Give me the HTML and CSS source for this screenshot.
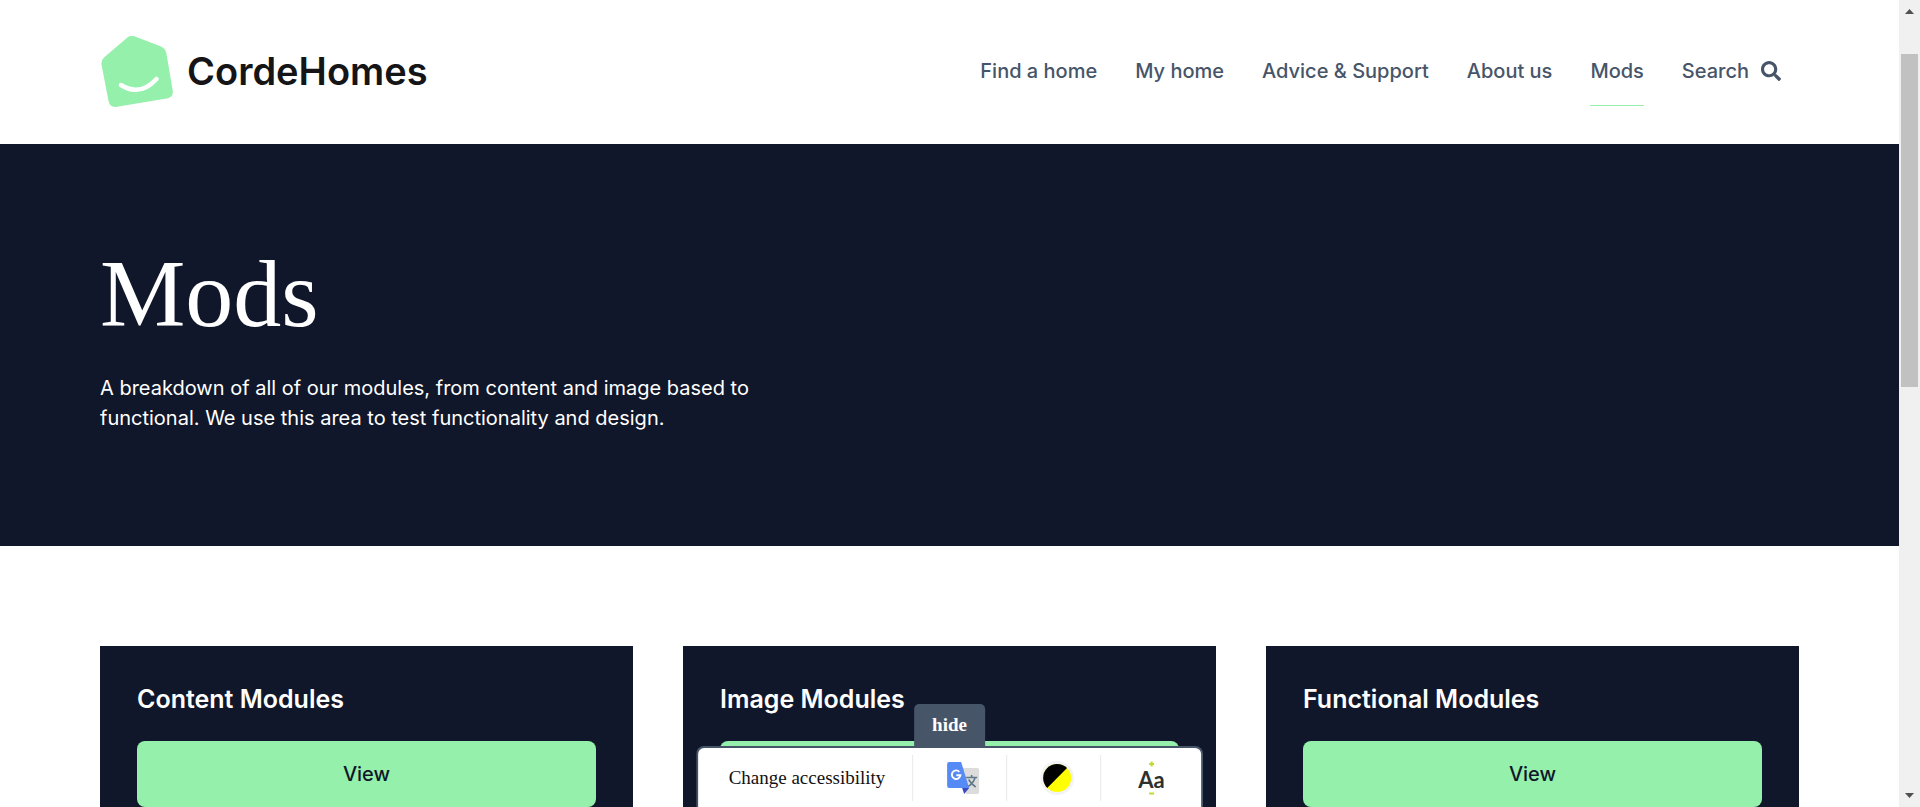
FILE: index.html
```html
<!DOCTYPE html>
<html lang="en">
<head>
<meta charset="utf-8">
<title>Mods | CordeHomes</title>
<link rel="stylesheet" href="styles.css">
</head>
<body>
<div class="viewport">
  <header class="header">
    <a class="logo" href="#">
      <svg class="logo-mark" viewBox="0 0 72 72" aria-hidden="true">
        <path d="M27 1Q30-1.200 34 .6L60 10.500Q64.500 12.500 65.300 17L71.800 55Q72.300 60.500 67 62.200L16 70.800Q9 72 7.500 65L.5 28.500Q0 24.500 3 21.500Z" fill="#94f0ab"/>
        <path d="M20 49Q39 61 55.500 43" fill="none" stroke="#fff" stroke-width="4.500" stroke-linecap="round"/>
      </svg>
      <span class="logo-text">CordeHomes</span>
    </a>
    <nav class="nav">
      <a href="#">Find a home</a>
      <a href="#">My home</a>
      <a href="#">Advice &amp; Support</a>
      <a href="#">About us</a>
      <a href="#" class="current">Mods</a>
      <a href="#" class="search">Search
        <svg viewBox="0 0 512 512" width="20" height="20" fill="currentColor" aria-hidden="true"><path d="M505 442.700L405.300 343c-4.500-4.500-10.600-7-17-7H372c27.600-35.300 44-79.700 44-128C416 93.100 322.900 0 208 0S0 93.100 0 208s93.100 208 208 208c48.300 0 92.700-16.400 128-44v16.300c0 6.400 2.500 12.500 7 17l99.700 99.700c9.400 9.400 24.600 9.400 33.900 0l28.300-28.300c9.400-9.400 9.400-24.600.1-34zM208 336c-70.700 0-128-57.200-128-128 0-70.700 57.200-128 128-128 70.700 0 128 57.200 128 128 0 70.700-57.200 128-128 128z"/></svg>
      </a>
    </nav>
  </header>
  <main>
    <section class="hero">
      <h1>Mods</h1>
      <p>A breakdown of all of our modules, from content and image based to functional. We use this area to test functionality and design.</p>
    </section>
    <section class="cards">
      <article class="card"><h2>Content Modules</h2><a class="button" href="#">View</a></article>
      <article class="card"><h2>Image Modules</h2><a class="button" href="#">View</a></article>
      <article class="card"><h2>Functional Modules</h2><a class="button" href="#">View</a></article>
    </section>
  </main>
  <div class="access">
    <button class="hide" type="button">hide</button>
    <div class="access-bar">
      <span class="access-label">Change accessibility</span>
      <button class="tool" type="button" aria-label="Translate">
        <svg width="34" height="34" viewBox="0 0 34 34">
          <path d="M13 7H31Q33 7 33 9V31Q33 33 31 33H20Z" fill="#dcdcdc"/>
          <path d="M20 16.500H31M25.500 14V16.500M29 16.500Q27 23 21 26M22.500 18.500Q25 23 29.500 26" fill="none" stroke="#607988" stroke-width="1.600"/>
          <path d="M16 27H23L18 33Z" fill="#3a49c0"/>
          <path d="M3 1H15L23 27H3Q1 27 1 25V3Q1 1 3 1Z" fill="#568af5"/>
          <path d="M13.200 10.800A4.300 4.300 0 1 0 14.300 14.200H10.200" fill="none" stroke="#fff" stroke-width="1.900"/>
        </svg>
      </button>
      <button class="tool" type="button" aria-label="Contrast">
        <svg width="34" height="34" viewBox="0 0 34 34">
          <circle cx="17" cy="17" r="17" fill="#f3f3f6"/>
          <circle cx="17" cy="17" r="14" fill="#ff0"/>
          <path d="M7.100 26.900A14 14 0 0 1 26.900 7.100Z" fill="#000"/>
        </svg>
      </button>
      <button class="tool text-size" type="button" aria-label="Text size">
        <svg width="7" height="6" viewBox="0 0 7 6"><path d="M1 3H6M3.500 .5V5.500" stroke="#c5d92d" stroke-width="2"/></svg>
        <span>Aa</span>
        <svg width="7" height="3" viewBox="0 0 7 3"><path d="M1 1.500H6" stroke="#c5d92d" stroke-width="2"/></svg>
      </button>
    </div>
  </div>
</div>
<div class="scrollbar" aria-hidden="true">
  <svg width="9" height="5" viewBox="0 0 9 5"><path d="M0 5L4.500 0L9 5Z" fill="#505050"/></svg>
  <div class="track"><div class="thumb"></div></div>
  <svg width="9" height="5" viewBox="0 0 9 5"><path d="M0 0H9L4.500 5Z" fill="#505050"/></svg>
</div>
</body>
</html>
```
FILE: styles.css
```css
* { box-sizing: border-box; }
body {
  margin: 0;
  height: 100vh;
  display: flex;
  overflow: hidden;
  background: #fff;
  color: #11172a;
  font: 20px/30px Inter, "Liberation Sans", sans-serif;
}
a { color: inherit; text-decoration: none; }
h1, h2, p { margin: 0; }

.viewport { flex: 1; min-width: 0; position: relative; overflow: hidden; }

.header {
  height: 144px;
  padding: 0 118px 0 101px;
  display: flex;
  align-items: center;
  justify-content: space-between;
}
.logo { display: flex; align-items: center; gap: 14px; }
.logo-mark { width: 72px; height: 72px; }
.logo-text { padding-bottom: 2px; font-size: 38px; line-height: 48px; font-weight: 600; color: #151517; }
.nav { display: flex; gap: 38px; color: #475569; font-weight: 500; }
.nav a { padding: 18px 0 19px; border-bottom: 1px solid transparent; }
.nav .current { border-color: #94f0ab; }
.search { display: flex; align-items: center; gap: 12px; }

.hero { background: #11172a; color: #fff; padding: 94px 100px 113px; }
.hero h1 { font: 400 96px/112px "Liberation Serif", serif; margin-bottom: 23px; }
.hero p { max-width: 680px; }

.cards {
  padding: 100px;
  display: grid;
  grid-template-columns: repeat(3, 1fr);
  gap: 50px;
}
.card { background: #11172a; padding: 35px 37px 38px; }
.card h2 { color: #fff; font-size: 25px; line-height: 36px; font-weight: 600; margin-bottom: 24px; }
.button {
  display: block;
  padding: 18px;
  border-radius: 8px;
  background: #94f0ab;
  text-align: center;
  font-weight: 500;
}

.access {
  position: absolute;
  bottom: 0;
  left: 50%;
  transform: translateX(-50%);
  display: flex;
  flex-direction: column;
  align-items: center;
  font-family: "Liberation Serif", serif;
}
.access button { border: 0; cursor: pointer; }
.hide {
  width: 71px;
  height: 42px;
  padding: 0;
  border-radius: 5px 5px 0 0;
  background: #475569;
  color: #fff;
  font: 700 19px/42px "Liberation Serif", serif;
}
.access-bar {
  display: flex;
  align-items: center;
  height: 61px;
  border: 2px solid #475569;
  border-bottom: 0;
  border-radius: 8px 8px 0 0;
  background: #fff;
}
.access-label { padding: 4px 27px 4px 31px; font-size: 19px; color: #111; }
.tool {
  width: 94px;
  height: 46px;
  padding: 0 0 0 6px;
  display: flex;
  align-items: center;
  justify-content: center;
  background: none;
}
.access-bar .tool { border-left: 1px solid #e9e9ec; }
.access-bar .text-size { width: 101px; padding: 0; }
.text-size { flex-direction: column; gap: 2px; color: #2c3130; }
.text-size span { font: 700 22px/21px Lato, sans-serif; }

.scrollbar {
  width: 21px;
  padding: 9px 0;
  display: flex;
  flex-direction: column;
  align-items: center;
  background: #f0f0f0;
}
.track { flex: 1; width: 17px; padding-top: 40px; }
.thumb { height: 45%; background: #c1c1c1; }
```
